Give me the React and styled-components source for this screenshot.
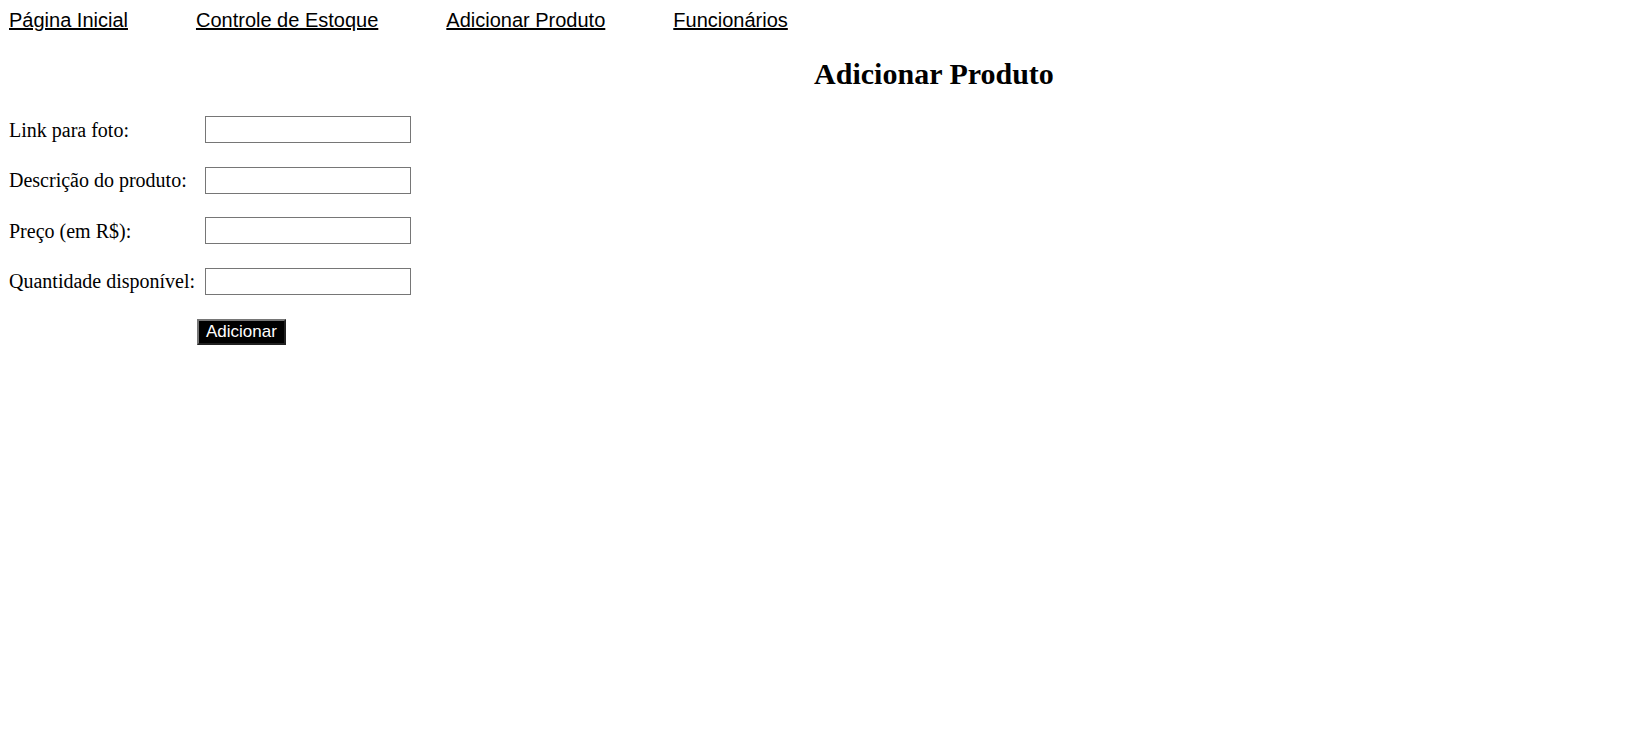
import React, { useState } from "react";
import styled, { createGlobalStyle } from "styled-components";

const GlobalStyle = createGlobalStyle`
  body {
    margin: 8px;
    background: #fff;
    color: #000;
    font-family: "Liberation Serif", "Times New Roman", serif;
  }
`;

const links = ["Página Inicial", "Controle de Estoque", "Adicionar Produto", "Funcionários"];

const fields = [
  { id: "foto", label: "Link para foto:" },
  { id: "descricao", label: "Descrição do produto:" },
  { id: "preco", label: "Preço (em R$):" },
  { id: "quantidade", label: "Quantidade disponível:" },
];

export default function App() {
  const [values, setValues] = useState({});

  const onChange = (id) => (e) => setValues({ ...values, [id]: e.target.value });

  return (
    <>
      <GlobalStyle />
      <Nav>
        {links.map((l) => (
          <NavLink key={l} href="#">
            {l}
          </NavLink>
        ))}
      </Nav>
      <Title>Adicionar Produto</Title>
      <Form onSubmit={(e) => e.preventDefault()}>
        {fields.map((f) => (
          <React.Fragment key={f.id}>
            <Label htmlFor={f.id}>{f.label}</Label>
            <Input id={f.id} value={values[f.id] || ""} onChange={onChange(f.id)} />
          </React.Fragment>
        ))}
        <ButtonCell>
          <Button type="submit">Adicionar</Button>
        </ButtonCell>
      </Form>
    </>
  );
}

const Nav = styled.nav`
  display: flex;
  gap: 68px;
  padding-top: 1px;
  padding-left: 1px;
`;

const NavLink = styled.a`
  font-family: "Liberation Sans", Arial, sans-serif;
  font-size: 20px;
  color: #000;
  text-decoration: underline;
`;

const Title = styled.h1`
  margin: 25px 0 0;
  padding-left: 222px;
  text-align: center;
  font-size: 30px;
  font-weight: bold;
`;

const Form = styled.form`
  display: grid;
  grid-template-columns: 196px 206px;
  grid-auto-rows: 27px;
  row-gap: 23.5px;
  align-items: center;
  margin-top: 25px;
  padding-left: 1px;
`;

const Label = styled.label`
  font-size: 20px;
  white-space: nowrap;
  padding-top: 1px;
`;

const Input = styled.input`
  box-sizing: border-box;
  width: 206px;
  height: 27px;
  border: 1px solid #767676;
  padding: 1px 4px;
  font-size: 14px;
  outline: none;
`;

const ButtonCell = styled.div`
  grid-column: 1 / span 2;
  padding-left: 188px;
  margin-top: 1px;
`;

const Button = styled.button`
  box-sizing: border-box;
  height: 26px;
  padding: 1px 7px;
  background: #000;
  color: #fff;
  border: 2px outset #767676;
  font-family: "Liberation Sans", Arial, sans-serif;
  font-size: 17px;
  cursor: pointer;
`;
